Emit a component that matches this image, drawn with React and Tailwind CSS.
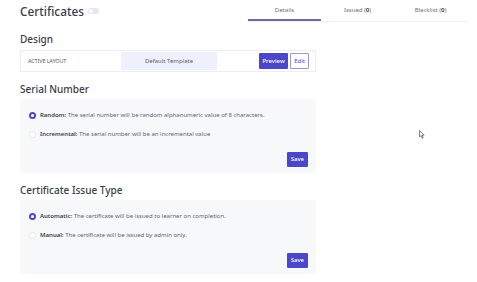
export default function App() {
  const font = { fontFamily: '"Noto Sans", "Open Sans", sans-serif' };
  const Radio = ({ checked }) =>
    checked ? (
      <span className="w-[7px] h-[7px] rounded-full bg-[#4d4ac4] flex items-center justify-center shrink-0">
        <span className="w-[3px] h-[3px] rounded-full bg-white" />
      </span>
    ) : (
      <span className="w-[7px] h-[7px] rounded-full border border-[#e4e6ec] bg-white shrink-0" />
    );
  return (
    <div className="w-[477px] h-[282px] bg-white relative overflow-hidden text-[#3a3f4a]" style={font}>
      <div className="flex items-start pl-[20px] pr-[10px]">
        <div className="flex items-center pt-[3px] gap-[4px]">
          <span className="text-[11.8px] leading-[16px] font-medium text-[#3a3d45]">Certificates</span>
          <span className="w-[11px] h-[6px] rounded-full bg-[#e6e7ea] relative">
            <span className="absolute left-[1px] top-[1px] w-[4px] h-[4px] rounded-full bg-white" />
          </span>
        </div>
        <div className="ml-auto flex w-[219px] border-b border-[#f0f1f3]">
          <div className="flex-1 text-center text-[6px] leading-[8px] pt-[6px] pb-[5px] text-[#6b7080] border-b-[2px] border-[#6e6d9a]">Details</div>
          <div className="flex-1 text-center text-[6px] leading-[8px] pt-[6px] pb-[5px] text-[#6b7080]">Issued (<b className="font-semibold text-[#2b2f3a]">0</b>)</div>
          <div className="flex-1 text-center text-[6px] leading-[8px] pt-[6px] pb-[5px] text-[#6b7080]">Blacklist (<b className="font-semibold text-[#2b2f3a]">0</b>)</div>
        </div>
      </div>
      <div className="pl-[20px] w-[316px]">
        <div className="text-[10px] leading-[12px] font-medium text-[#3a3d45] mt-[11px]">Design</div>
        <div className="mt-[5px] h-[22px] border border-[#eceef2] flex items-center pl-[7px] pr-[6px]">
          <span className="text-[5.5px] text-[#555a66] tracking-tight w-[93px]">ACTIVE LAYOUT</span>
          <span className="w-[96px] h-[18px] bg-[#eef0fb] flex items-center justify-center text-[6px] text-[#5b6070]">Default Template</span>
          <span className="ml-auto h-[16px] px-[3.5px] bg-[#4b47c8] text-white text-[6px] font-medium flex items-center rounded-[1px]">Preview</span>
          <span className="ml-[2px] h-[16px] px-[3px] border border-[#9a98dc] text-[#4b47c8] text-[6px] flex items-center rounded-[1px]">Edit</span>
        </div>

        <div className="text-[10px] leading-[12px] font-medium text-[#3a3d45] mt-[11px]">Serial Number</div>
        <div className="mt-[4px] h-[74px] bg-[#f7f8fa] pl-[9px] pr-[8px] pt-[12px] flex flex-col">
          <div className="flex items-center gap-[4px] text-[6px] leading-[8px]">
            <Radio checked />
            <span><b className="font-semibold text-[#3a3d45]">Random:</b> <span className="text-[#606574]">The serial number will be random alphanumeric value of 8 characters.</span></span>
          </div>
          <div className="flex items-center gap-[4px] text-[6px] leading-[8px] mt-[11px]">
            <Radio />
            <span><b className="font-semibold text-[#3a3d45]">Incremental:</b> <span className="text-[#606574]">The serial number will be an incremental value</span></span>
          </div>
          <span className="self-end mt-[14px] h-[15px] px-[4px] bg-[#4b47c8] text-white text-[6px] font-medium flex items-center rounded-[1px]">Save</span>
        </div>

        <div className="text-[10px] leading-[12px] font-medium text-[#3a3d45] mt-[11px]">Certificate Issue Type</div>
        <div className="mt-[4px] h-[74px] bg-[#f7f8fa] pl-[9px] pr-[8px] pt-[12px] flex flex-col">
          <div className="flex items-center gap-[4px] text-[6px] leading-[8px]">
            <Radio checked />
            <span><b className="font-semibold text-[#3a3d45]">Automatic:</b> <span className="text-[#606574]">The certificate will be issued to learner on completion.</span></span>
          </div>
          <div className="flex items-center gap-[4px] text-[6px] leading-[8px] mt-[11px]">
            <Radio />
            <span><b className="font-semibold text-[#3a3d45]">Manual:</b> <span className="text-[#606574]">The certificate will be issued by admin only.</span></span>
          </div>
          <span className="self-end mt-[14px] h-[15px] px-[4px] bg-[#4b47c8] text-white text-[6px] font-medium flex items-center rounded-[1px]">Save</span>
        </div>
      </div>
      <svg className="absolute left-[419px] top-[130px]" width="6" height="9" viewBox="0 0 6 9">
        <path d="M0.5 0.5 L0.5 7 L2 5.5 L3.2 8.3 L4.2 7.9 L3 5.2 L5.2 5.2 Z" fill="white" stroke="#555" strokeWidth="0.7" />
      </svg>
    </div>
  );
}
